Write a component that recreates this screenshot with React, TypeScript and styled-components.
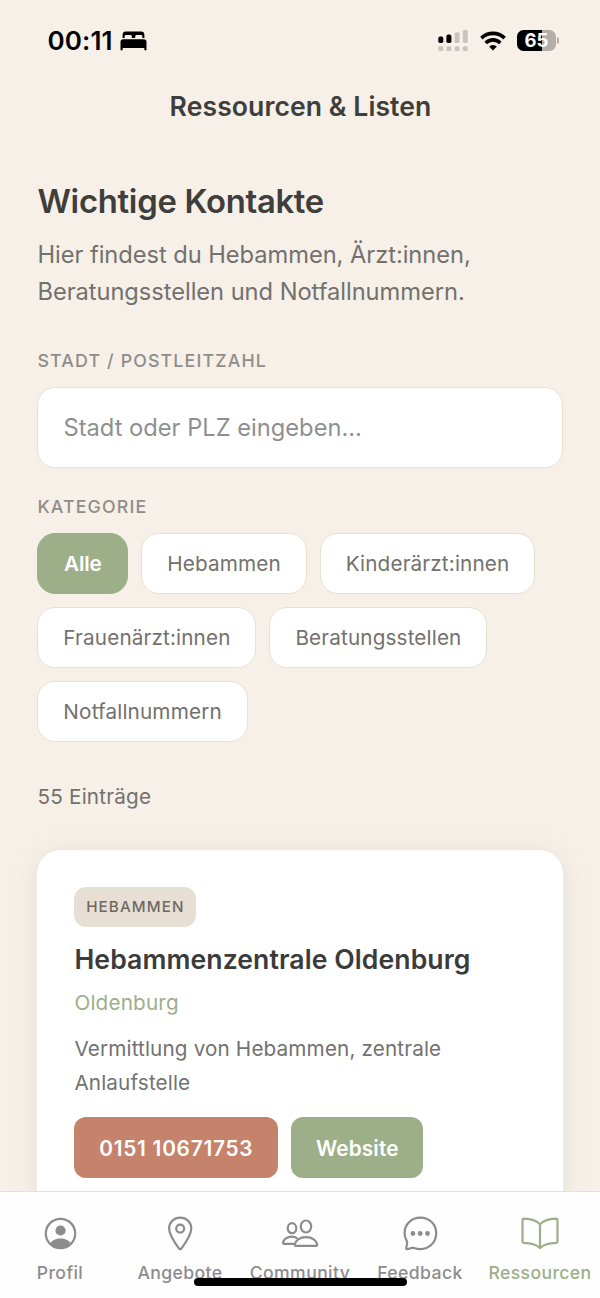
import React from "react";
import styled, { createGlobalStyle } from "styled-components";

const color = {
  sand: "#f6f0e9",
  line: "#e8e0d3",
  ink: "#3f3e3b",
  body: "#73716d",
  muted: "#8f8d87",
  sage: "#9caf88",
  clay: "#c5836b",
  badge: "#e8dfd4",
};

const GlobalStyle = createGlobalStyle`
  * { box-sizing: border-box; }
  body {
    margin: 0;
    background: ${color.sand};
    font-family: Inter, "Liberation Sans", sans-serif;
    -webkit-font-smoothing: antialiased;
  }
  h1, h2, h3, p { margin: 0; font-weight: inherit; }
  button, input { font-family: inherit; margin: 0; }
  svg { display: block; }
`;

const Screen = styled.div`
  width: 600px;
  height: 1298px;
  display: flex;
  flex-direction: column;
  overflow: hidden;
  background: ${color.sand};
`;

const StatusBar = styled.div`
  flex: none;
  height: 81px;
  padding: 0 41px 0 47.5px;
  display: flex;
  align-items: center;
  justify-content: space-between;
  color: #000;
`;

const StatusGroup = styled.div<{ $gap: number }>`
  display: flex;
  align-items: center;
  gap: ${(p) => p.$gap}px;
`;

const Clock = styled.span`
  font-size: 26px;
  font-weight: 600;
  letter-spacing: 0.1px;
  line-height: 32px;
`;

const Battery = styled.div`
  display: flex;
  align-items: center;
  gap: 1px;
`;

const BatteryBody = styled.div`
  width: 39px;
  height: 21px;
  border-radius: 6.5px;
  background: linear-gradient(to right, #000 65%, #b3aeaa 65%);
  color: #fff;
  display: flex;
  align-items: center;
  justify-content: center;
  font-size: 18.5px;
  font-weight: 700;
  line-height: 21px;
`;

const BatteryNub = styled.div`
  width: 2px;
  height: 7px;
  border-radius: 0 3px 3px 0;
  background: #b3aeaa;
`;

const Header = styled.header`
  flex: none;
  height: 51px;
  padding: 0 0 2px 1px;
  display: flex;
  align-items: center;
  justify-content: center;
  font-size: 26.6px;
  font-weight: 600;
  letter-spacing: 0.06px;
  color: ${color.ink};
`;

const Content = styled.main`
  flex: 1;
  min-height: 0;
  overflow: hidden;
  padding: 48px 37.45px 0;
`;

const Title = styled.h1`
  font-size: 32.8px;
  font-weight: 600;
  letter-spacing: -0.28px;
  line-height: 42px;
  color: ${color.ink};
`;

const Intro = styled.p`
  margin-top: 14px;
  font-size: 23.7px;
  line-height: 37px;
  color: ${color.body};
  letter-spacing: -0.05px;
`;

const FieldLabel = styled.div<{ $top: number }>`
  margin-top: ${(p) => p.$top}px;
  font-size: 17.8px;
  font-weight: 500;
  line-height: 23px;
  letter-spacing: 1.14px;
  text-transform: uppercase;
  color: ${color.muted};
`;

const SearchInput = styled.input`
  display: block;
  width: 100%;
  height: 81px;
  margin-top: 15px;
  padding: 0 25px;
  border: 1.5px solid ${color.line};
  border-radius: 18px;
  background: #fff;
  color: ${color.ink};
  font-size: 23.7px;
  outline: none;
  &::placeholder {
    color: #8f8f8f;
    opacity: 1;
  }
`;

const ChipList = styled.div`
  display: flex;
  flex-wrap: wrap;
  gap: 13px;
  margin-top: 15px;
`;

const Chip = styled.button<{ $active?: boolean }>`
  height: 61px;
  padding: 0 ${(p) => (p.$active ? 25.6 : 24.92)}px;
  border: 1.5px solid ${(p) => (p.$active ? color.sage : color.line)};
  border-radius: 18px;
  background: ${(p) => (p.$active ? color.sage : "#fff")};
  color: ${(p) => (p.$active ? "#fff" : color.body)};
  font-size: 20.7px;
  font-weight: ${(p) => (p.$active ? 600 : 400)};
  letter-spacing: ${(p) => (p.$active ? -0.1 : 0.15)}px;
`;

const ResultCount = styled.p`
  margin-top: 41px;
  font-size: 20.7px;
  line-height: 28px;
  letter-spacing: 0.2px;
  color: ${color.body};
`;

const Card = styled.article`
  margin-top: 39px;
  height: 420px;
  padding: 37px;
  border-radius: 24px;
  background: #fff;
  box-shadow: 0 3px 28px rgba(135, 145, 110, 0.14);
`;

const Badge = styled.span`
  display: flex;
  align-items: center;
  width: fit-content;
  height: 40px;
  padding: 0 11.8px 1px;
  border-radius: 12px;
  background: ${color.badge};
  color: #6f6962;
  font-size: 15.2px;
  font-weight: 500;
  letter-spacing: 1.08px;
  text-transform: uppercase;
`;

const CardTitle = styled.h2`
  margin-top: 15px;
  font-size: 26.6px;
  font-weight: 600;
  line-height: 34px;
  letter-spacing: 0.08px;
  color: #3b3b3c;
`;

const City = styled.p`
  margin-top: 13px;
  font-size: 20.7px;
  line-height: 28px;
  letter-spacing: 0.17px;
  color: ${color.sage};
`;

const Description = styled.p`
  margin-top: 15px;
  font-size: 20.7px;
  line-height: 34px;
  letter-spacing: 0.14px;
  color: #727272;
`;

const Actions = styled.div`
  display: flex;
  gap: 13px;
  margin-top: 17px;
`;

const ActionButton = styled.button<{ $tone: string; $spacing: number }>`
  height: 61px;
  padding: 1px 24.8px 0;
  border: 0;
  border-radius: 12px;
  background: ${(p) => p.$tone};
  color: #fff;
  font-size: 20.8px;
  font-weight: 600;
  letter-spacing: ${(p) => p.$spacing}px;
`;

const TabBar = styled.nav`
  position: relative;
  flex: none;
  height: 107px;
  display: grid;
  grid-template-columns: repeat(5, 120px);
  border-top: 1.5px solid ${color.line};
  background: #fefefe;
`;

const Tab = styled.a<{ $active?: boolean }>`
  display: flex;
  flex-direction: column;
  align-items: center;
  padding-top: 23px;
  color: ${(p) => (p.$active ? color.sage : "#8c8c8c")};
`;

const TabLabel = styled.span`
  margin-top: 9px;
  font-size: 17.6px;
  font-weight: 500;
  line-height: 22px;
  letter-spacing: 0.4px;
  white-space: nowrap;
`;

const HomeIndicator = styled.div`
  position: absolute;
  left: 193.5px;
  bottom: 12px;
  width: 213.5px;
  height: 8px;
  border-radius: 4px;
  background: #000;
`;

const BedIcon = () => (
  <svg width="27" height="20" viewBox="0 0 27 20" fill="currentColor">
    <path d="M2.6 6.900V3.900C2.600 1.800 3.800.600 5.900.600h15.200c2.100 0 3.300 1.200 3.300 3.300v3h-2V5.700c0-1-.5-1.600-1.500-1.600h-4.200c-1 0-1.500.6-1.500 1.600v1.200h-3.400V5.700c0-1-.5-1.600-1.500-1.600H6.100c-1 0-1.500.6-1.500 1.600v1.200z" />
    <path d="M3.400 8.200h20.200c2 0 2.900 1 2.900 2.800v7.200c0 .8-.4 1.200-1.100 1.200s-1.100-.4-1.100-1.200v-1.100H2.700v1.100c0 .8-.4 1.200-1.100 1.200S.5 19 .5 18.200V11c0-1.800.9-2.800 2.900-2.800z" />
  </svg>
);

const SignalIcon = () => (
  <svg width="30" height="22" viewBox="0 0 30 22">
    <g fill="#000">
      <rect x="0.3" y="6.600" width="5" height="6.400" rx="1.800" />
      <rect x="8.400" y="4.600" width="5" height="8.400" rx="1.800" />
    </g>
    <g fill="#c8c3be">
      <rect x="16.600" y="2.300" width="5" height="10.700" rx="1.500" />
      <rect x="24.800" y="0" width="5" height="13" rx="1.500" />
      <rect x="0.3" y="16.200" width="5" height="4.800" rx="1.500" />
      <rect x="8.400" y="16.200" width="5" height="4.800" rx="1.500" />
      <rect x="16.600" y="16.200" width="5" height="4.800" rx="1.500" />
      <rect x="24.800" y="16.200" width="5" height="4.800" rx="1.500" />
    </g>
  </svg>
);

const WifiIcon = () => (
  <svg width="26" height="20" viewBox="0 0 26 20" fill="none" stroke="#000" strokeWidth="3.600">
    <path d="M1.400 7.100a16.600 16.600 0 0 1 23.200 0" />
    <path d="M5.700 11.900a10.300 10.300 0 0 1 14.600 0" />
    <path d="M13 19.500l-3.900-3.900a5.400 5.400 0 0 1 7.800 0z" fill="#000" stroke="none" />
  </svg>
);

const iconProps = {
  width: 38,
  height: 38,
  viewBox: "0 0 38 38",
  fill: "none",
  stroke: "currentColor",
  strokeWidth: 2.2,
  strokeLinecap: "round" as const,
  strokeLinejoin: "round" as const,
};

const ProfileIcon = () => (
  <svg {...iconProps}>
    <circle cx="19.500" cy="18.500" r="14.700" />
    <circle cx="19.500" cy="15.500" r="5.100" fill="currentColor" stroke="none" />
    <path
      d="M9.600 28.200c1.600-2.900 5.400-4.600 9.900-4.600s8.300 1.700 9.900 4.600c-2.600 2.900-6 4.800-9.900 4.800s-7.300-1.900-9.900-4.800z"
      fill="currentColor"
      stroke="none"
    />
  </svg>
);

const PinIcon = () => (
  <svg {...iconProps}>
    <path d="M19.200 2.600c-6.400 0-11.100 4.700-11.100 11 0 6.600 5.500 14 9.800 19.700.7 1 1.900 1 2.600 0 4.300-5.700 9.800-13.100 9.800-19.700C30.300 7.300 25.600 2.600 19.200 2.600z" />
    <circle cx="19.200" cy="13.600" r="4" />
  </svg>
);

const CommunityIcon = () => (
  <svg {...iconProps}>
    <ellipse cx="11" cy="13.200" rx="4.300" ry="5" />
    <ellipse cx="25" cy="11.500" rx="5.200" ry="6" />
    <path d="M15.800 23.100c-1.300-1-3-1.500-4.900-1.500-4.800 0-8.300 2.700-8.800 6-.2.900.2 1.200 1 1.200h9.400" />
    <path d="M25 22.100c-6.300 0-10.600 3.400-11.200 7.300-.1.900.3 1.400 1.200 1.400h20c.9 0 1.300-.5 1.200-1.400-.6-3.900-4.900-7.300-11.200-7.300z" />
  </svg>
);

const ChatIcon = () => (
  <svg {...iconProps}>
    <path d="M19.300 2.700c-9 0-15.700 6.700-15.700 15.400 0 3.100.8 5.500 2.100 7.800.5.900.6 1.600.4 2.500l-.9 4.700c-.2.900.3 1.300 1.100 1.100l4.900-1.300c.8-.2 1.300-.2 2 .1 2.100.8 4 1.100 6.100 1.100 9 0 15.900-6.900 15.900-15.900S28.300 2.700 19.300 2.700z" />
    <g fill="currentColor" stroke="none">
      <circle cx="11.900" cy="18.500" r="2.400" />
      <circle cx="19.200" cy="18.500" r="2.400" />
      <circle cx="26.500" cy="18.500" r="2.400" />
    </g>
  </svg>
);

const BookIcon = () => (
  <svg {...iconProps}>
    <path d="M19 9.200C15.300 5.400 10.600 3.900 2.900 3.700c-.8 0-1.400.6-1.400 1.400v21.400c0 .8.500 1.300 1.400 1.300 7.500.2 12.300 1.500 16.100 5.200 3.800-3.700 8.600-5 16.100-5.200.9 0 1.400-.5 1.400-1.300V5.100c0-.8-.6-1.400-1.400-1.400-7.700.2-12.400 1.700-16.100 5.500z" />
    <path d="M19 9.200v23.600" />
  </svg>
);

const categories = [
  "Alle",
  "Hebammen",
  "Kinderärzt:innen",
  "Frauenärzt:innen",
  "Beratungsstellen",
  "Notfallnummern",
];

const tabs = [
  { label: "Profil", Icon: ProfileIcon },
  { label: "Angebote", Icon: PinIcon },
  { label: "Community", Icon: CommunityIcon },
  { label: "Feedback", Icon: ChatIcon },
  { label: "Ressourcen", Icon: BookIcon },
];

export default function App() {
  return (
    <>
      <GlobalStyle />
      <Screen>
        <StatusBar>
          <StatusGroup $gap={7}>
            <Clock>00:11</Clock>
            <BedIcon />
          </StatusGroup>
          <StatusGroup $gap={11.5}>
            <SignalIcon />
            <WifiIcon />
            <Battery>
              <BatteryBody>65</BatteryBody>
              <BatteryNub />
            </Battery>
          </StatusGroup>
        </StatusBar>
        <Header>Ressourcen &amp; Listen</Header>
        <Content>
          <Title>Wichtige Kontakte</Title>
          <Intro>
            Hier findest du Hebammen, Ärzt:innen, Beratungsstellen und Notfallnummern.
          </Intro>
          <FieldLabel $top={39}>Stadt / Postleitzahl</FieldLabel>
          <SearchInput placeholder="Stadt oder PLZ eingeben..." />
          <FieldLabel $top={27}>Kategorie</FieldLabel>
          <ChipList>
            {categories.map((name, i) => (
              <Chip key={name} $active={i === 0}>
                {name}
              </Chip>
            ))}
          </ChipList>
          <ResultCount>55 Einträge</ResultCount>
          <Card>
            <Badge>Hebammen</Badge>
            <CardTitle>Hebammenzentrale Oldenburg</CardTitle>
            <City>Oldenburg</City>
            <Description>Vermittlung von Hebammen, zentrale Anlaufstelle</Description>
            <Actions>
              <ActionButton $tone={color.clay} $spacing={0.75}>
                0151 10671753
              </ActionButton>
              <ActionButton $tone={color.sage} $spacing={0.14}>
                Website
              </ActionButton>
            </Actions>
          </Card>
        </Content>
        <TabBar>
          {tabs.map(({ label, Icon }) => (
            <Tab key={label} $active={label === "Ressourcen"}>
              <Icon />
              <TabLabel>{label}</TabLabel>
            </Tab>
          ))}
          <HomeIndicator />
        </TabBar>
      </Screen>
    </>
  );
}
